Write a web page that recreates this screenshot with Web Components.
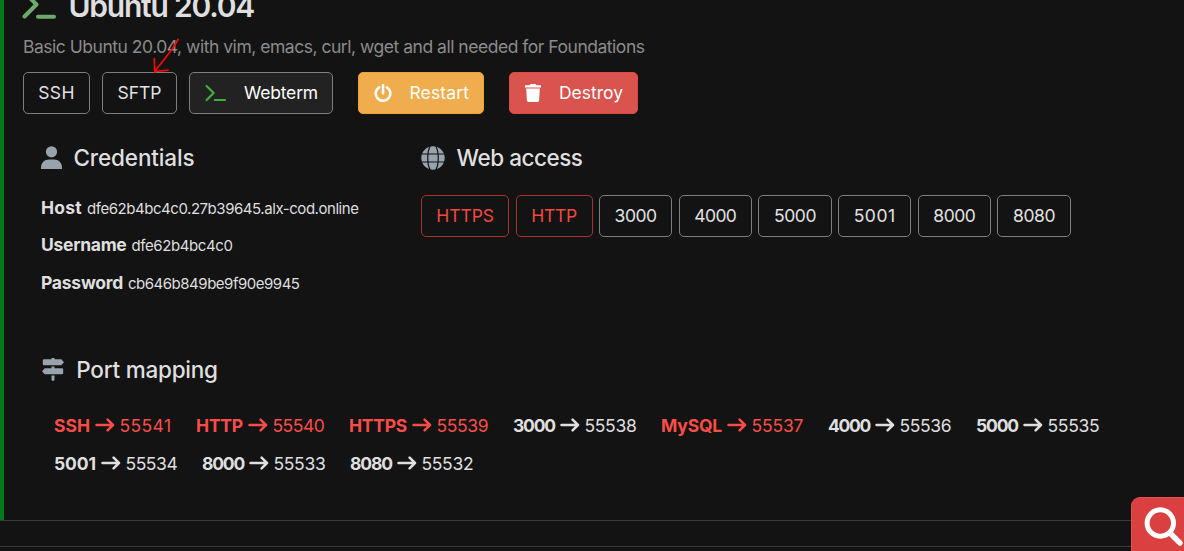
<!DOCTYPE html>
<html lang="en">
<head>
<meta charset="utf-8">
<title>Sandbox</title>
<style>
html,body{margin:0;height:100%;overflow:hidden;background:#131313}
body{font-family:Inter,"Liberation Sans",sans-serif;font-size:17.5px;color:#dfdfdf}
</style>
</head>
<body>
<sandbox-page></sandbox-page>
<script>
const define = (name, render) => customElements.define(name, class extends HTMLElement {
  connectedCallback() {
    if (this.shadowRoot) return;
    this.attachShadow({ mode: 'open' }).innerHTML = render(this);
  }
});

/* Text tracked to an exact measure given by the w attribute. */
customElements.define('fit-text', class extends HTMLElement {
  connectedCallback() {
    if (this.shadowRoot) return;
    this.attachShadow({ mode: 'open' }).innerHTML =
      `<style>:host{display:block;flex:none;white-space:nowrap}span{display:inline-block}</style><span><slot></slot></span>`;
    const span = this.shadowRoot.querySelector('span');
    const w = parseFloat(this.getAttribute('w'));
    const natural = span.getBoundingClientRect().width;
    span.style.letterSpacing = ((w - natural) / this.textContent.length) + 'px';
    this.style.width = w + 'px';
  }
});

const icons = {
  prompt: ['0 0 36 30', '<path d="M2.5 2.5 14.5 14.5 2.5 26.5M16 26.8H32" fill="none" stroke="currentColor" stroke-width="4" stroke-linecap="round" stroke-linejoin="round"/>'],
  promptSmall: ['0 0 22 18', '<path d="M1.6 2 8.6 9 1.6 16M9.8 16H20" fill="none" stroke="currentColor" stroke-width="2.2" stroke-linecap="round" stroke-linejoin="round"/>'],
  power: ['0 0 18 18', '<path d="M9 1.2V9.2M5.1 3.3A7.3 7.3 0 1 0 12.9 3.3" fill="none" stroke="currentColor" stroke-width="2.6" stroke-linecap="round"/>'],
  trash: ['0 0 16 18', '<path d="M0 1.2H4.5L5.4 0H10.6L11.5 1.2H16V3.4H0ZM1.2 4.5H14.8L14.1 16.6Q14 18 12.6 18H3.4Q2 18 1.9 16.6Z" fill="currentColor"/>'],
  user: ['0 0 21 23', '<circle cx="10.5" cy="5.8" r="5.6" fill="currentColor"/><path d="M0 23V21.6C0 17 3.4 13.6 8 13.6H13C17.6 13.6 21 17 21 21.6V23Z" fill="currentColor"/>'],
  globe: ['0 0 24 24', '<circle cx="12" cy="12" r="11.7" fill="currentColor"/><path d="M0 8H24M0 16H24M9.3 0C5.9 5.4 5.9 18.6 9.3 24M14.7 0C18.1 5.4 18.1 18.6 14.7 24" fill="none" stroke="#131313" stroke-width="1.2"/>'],
  signs: ['0 0 22 23', '<path d="M9.5 1.2V0H12.5V1.2H19.3L22 4.2 19.3 7.2H2Q.8 7.2.8 6V2.4Q.8 1.2 2 1.2ZM9.5 8.6H12.5V10.2H20Q21.2 10.2 21.2 11.4V15Q21.2 16.2 20 16.2H2.7L0 13.2 2.7 10.2H9.5ZM9.5 17.6H12.5V21.6Q12.5 23 11 23T9.5 21.6Z" fill="currentColor"/>'],
  arrow: ['0 0 20 14', '<path d="M1.5 7H18M12.6 1.7 18 7 12.6 12.3" fill="none" stroke="currentColor" stroke-width="2.5" stroke-linecap="round" stroke-linejoin="round"/>'],
  search: ['0 0 40 40', '<circle cx="16.3" cy="16" r="13.2" fill="none" stroke="currentColor" stroke-width="5"/><path d="M26 26 36 36" fill="none" stroke="currentColor" stroke-width="5.4" stroke-linecap="round"/>']
};
define('ui-icon', el => {
  const [box, shape] = icons[el.getAttribute('name')];
  const [, , w, h] = box.split(' ');
  return `<style>:host{display:block;flex:none;width:${w}px;height:${h}px}svg{display:block;width:100%;height:100%}</style><svg viewBox="${box}">${shape}</svg>`;
});

define('ui-button', el => `<style>
:host{display:flex;flex:none;box-sizing:border-box;width:${el.getAttribute('w')}px;height:42px;align-items:center;justify-content:center;border:1px solid #7e7e7e;border-radius:5px;color:#e2e2e2;line-height:40px}
:host([kind=red]){border-color:#a8322f;color:#f4483f}
:host([kind=dark]){background:#222;color:#fff}
:host([kind=warning]){background:#f0ad4e;border-color:#eea236;color:#fff}
:host([kind=danger]){background:#d9534f;border-color:#e04a42;color:#fff}
:host([icon]){justify-content:space-between;padding:0 14px 0 15px}
:host([kind=dark]) ui-icon{color:#3fae3a}
ui-icon{margin-bottom:1px}
</style>${el.hasAttribute('icon') ? `<ui-icon name="${el.getAttribute('icon')}"></ui-icon>` : ''}<fit-text w="${el.getAttribute('tw')}">${el.getAttribute('label')}</fit-text>`);

define('section-title', el => `<style>
:host{display:flex;align-items:center;height:27px;line-height:27px;font-size:22.5px;font-weight:500;gap:${el.getAttribute('gap')}px}
ui-icon{color:#98a3ae}</style>
<ui-icon name="${el.getAttribute('icon')}"></ui-icon><fit-text w="${el.getAttribute('tw')}">${el.getAttribute('label')}</fit-text>`);

define('credential-row', el => `<style>
:host{display:flex;align-items:baseline;gap:5px;height:37.5px;line-height:37.5px}
.k{font-weight:650}.v{font-size:15px}</style>
<fit-text class="k" w="${el.getAttribute('kw')}">${el.getAttribute('key')}</fit-text><fit-text class="v" w="${el.getAttribute('vw')}">${el.getAttribute('value')}</fit-text>`);

define('port-item', el => `<style>
:host{display:flex;flex:none;align-items:center;gap:5px;height:38px;line-height:38px}
:host([red]){color:#f94d49}.k{font-weight:650}
fit-text{padding-top:1px}
fit-text:last-child{margin:0 .6px 0 -.6px}</style>
<fit-text class="k" w="${el.getAttribute('kw')}">${el.getAttribute('from')}</fit-text><ui-icon name="arrow"></ui-icon><fit-text w="52">${el.getAttribute('to')}</fit-text>`);

define('search-button', () => `<style>
:host{display:flex;position:absolute;right:0;bottom:0;box-sizing:border-box;width:53px;height:54px;padding:9px 0 0 12px;overflow:hidden;background:#db4040;border:solid #e4514c;border-width:1px 0 0 1px;border-radius:9px 0 0 0;color:#fff}
</style><ui-icon name="search"></ui-icon>`);

define('red-arrow', () => `<style>:host{display:block;position:absolute;left:150px;top:36px;width:32px;height:40px}svg{display:block}</style>
<svg width="32" height="40" viewBox="150 36 32 40"><path d="M178 39.5 173 48 164.5 59 155 71M154.3 58.5 154.7 72.5M155 71.500 168 70.2" fill="none" stroke="#fb0808" stroke-width="1.7" stroke-linecap="round"/></svg>`);

const ports = [['SSH',36,55541,1],['HTTP',47,55540,1],['HTTPS',58,55539,1],['3000',42,55538],['MySQL',61,55537,1],['4000',42,55536],['5000',42,55535],['5001',42,55534],['8000',42,55533],['8080',42,55532]];
define('sandbox-card', () => `<style>
:host{display:block;box-sizing:border-box;height:520px;border-left:4px solid #047a1f;overflow:hidden;padding-left:19px}
.title{display:flex;height:40px;margin-top:-14px;line-height:41px;font-size:30px;font-weight:600;gap:10.5px}
.title ui-icon{color:#6cab6b;margin-top:3.5px;margin-left:-1px}
.desc{margin-top:7px;line-height:27px;color:#8b8b8b}
.actions{display:flex;gap:12px;margin-top:12px}
.wide{margin-left:13px}
.cols{display:grid;grid-template-columns:380px 1fr;padding-left:18px;margin-top:30px}
.rows{padding-top:18px}
.rows :first-child{height:37px}
.web{display:flex;gap:6.4px;margin-top:24px}
.ports{padding:54.5px 0 0 18px}
.ports section-title{padding-left:1px}
.list{display:flex;flex-wrap:wrap;column-gap:24px;margin:23.5px 50px 0 13px}
</style>
<div class="title"><ui-icon name="prompt"></ui-icon><fit-text w="185.5">Ubuntu 20.04</fit-text></div>
<div class="desc"><fit-text w="621.5">Basic Ubuntu 20.04, with vim, emacs, curl, wget and all needed for Foundations</fit-text></div>
<div class="actions">
<ui-button w="67" tw="36.5" label="SSH"></ui-button>
<ui-button w="75" tw="44" label="SFTP"></ui-button>
<ui-button w="144" tw="74" label="Webterm" icon="promptSmall" kind="dark"></ui-button>
<ui-button class="wide" w="126" tw="59.5" label="Restart" icon="power" kind="warning"></ui-button>
<ui-button class="wide" w="129" tw="64" label="Destroy" icon="trash" kind="danger"></ui-button>
</div>
<div class="cols">
<div><section-title icon="user" gap="11.5" tw="121" label="Credentials"></section-title>
<div class="rows">
<credential-row key="Host" kw="41" value="dfe62b4bc4c0.27b39645.alx-cod.online" vw="271.5"></credential-row>
<credential-row key="Username" kw="85.5" value="dfe62b4bc4c0" vw="101"></credential-row>
<credential-row key="Password" kw="82" value="cb646b849be9f90e9945" vw="171.5"></credential-row>
</div></div>
<div><section-title icon="globe" gap="11.5" tw="126" label="Web access"></section-title>
<div class="web">
<ui-button kind="red" w="88.2" tw="57.5" label="HTTPS"></ui-button>
<ui-button kind="red" w="77" tw="45.5" label="HTTP"></ui-button>
${['3000','4000','5000','5001','8000','8080'].map(p => `<ui-button w="73.3" tw="42" label="${p}"></ui-button>`).join('')}
</div></div>
</div>
<div class="ports"><section-title icon="signs" gap="12.3" tw="141.5" label="Port mapping"></section-title>
<div class="list">${ports.map(([f, w, t, r]) => `<port-item from="${f}" kw="${w}" to="${t}" ${r ? 'red' : ''}></port-item>`).join('')}</div></div>`);

define('sandbox-page', () => `<style>
:host{display:block;position:relative;width:1184px;height:551px;overflow:hidden}
.next{height:25px;border:solid #3a3a3a;border-width:1px 0}
</style><sandbox-card></sandbox-card><div class="next"></div><red-arrow></red-arrow><search-button></search-button>`);
</script>
</body>
</html>
